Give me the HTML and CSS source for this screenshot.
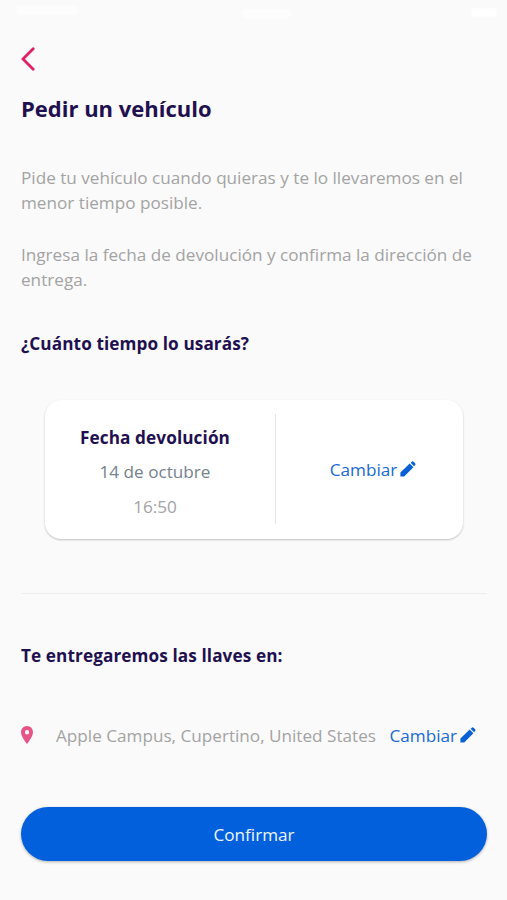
FILE: index.html
```html
<!DOCTYPE html>
<html lang="es">
<head>
<meta charset="utf-8">
<title>Pedir un vehículo</title>
<link rel="stylesheet" href="styles.css">
</head>
<body>
<div class="status"><i class="status-left"></i><i class="status-mid"></i><i class="status-right"></i></div>
<main>
  <a class="back" aria-label="Volver"><svg width="14" height="24" viewBox="0 0 14 24"><path d="M12.2 1.7 2 12l10.2 10.3" fill="none" stroke="#e02264" stroke-width="2.8" stroke-linecap="round"/></svg></a>
  <h1>Pedir un vehículo</h1>
  <p class="intro">Pide tu vehículo cuando quieras y te lo llevaremos en el<br>menor tiempo posible.</p>
  <p class="intro">Ingresa la fecha de devolución y confirma la dirección de<br>entrega.</p>
  <h2 class="when">¿Cuánto tiempo lo usarás?</h2>
  <section class="card">
    <div class="dates">
      <h3>Fecha devolución</h3>
      <div class="day">14 de octubre</div>
      <div class="hour">16:50</div>
    </div>
    <div class="action"><a class="change">Cambiar<svg width="16" height="16" viewBox="0 0 16 16"><path d="M.4 15.4v-3.800L9.700 2.600l3.700 3.600-9.200 9.200zM10.600 1.800 11.800.700q.9-.7 1.800 0l1.500 1.500q.8.9 0 1.800L14.100 5.300z"/></svg></a></div>
  </section>
  <hr>
  <h2 class="where">Te entregaremos las llaves en:</h2>
  <div class="address">
    <svg class="pin" width="12" height="18" viewBox="5 2 14 20" preserveAspectRatio="none"><path fill="#e65586" d="M12 2C8.13 2 5 5.13 5 9c0 5.25 7 13 7 13s7-7.75 7-13c0-3.87-3.13-7-7-7zm0 9.5a2.5 2.5 0 1 1 0-5 2.5 2.5 0 0 1 0 5z"/></svg>
    <span class="place">Apple Campus, Cupertino, United States</span>
    <a class="change">Cambiar<svg width="16" height="16" viewBox="0 0 16 16"><path d="M.4 15.4v-3.800L9.700 2.600l3.700 3.600-9.200 9.200zM10.600 1.800 11.800.700q.9-.7 1.800 0l1.500 1.500q.8.9 0 1.800L14.100 5.300z"/></svg></a>
  </div>
  <button class="confirm">Confirmar</button>
</main>
</body>
</html>
```
FILE: styles.css
```css
* { box-sizing: border-box; }
body {
  margin: 0;
  height: 900px;
  overflow: hidden;
  background: #fafafa;
  color: #a3a3a3;
  font: 17.15px/26px "Open Sans", sans-serif;
}
.status { height: 26px; padding: 6px 10px 0 16px; display: flex; justify-content: space-between; }
.status i { height: 9px; border-radius: 4px; background: #fff; filter: blur(1px); }
.status-left { width: 62px; opacity: .6; }
.status-mid { width: 48px; margin-right: 16px; margin-top: 3px; opacity: .7; }
.status-right { width: 26px; margin-top: 2px; }
main { padding: 0 20px 0 21px; }
.back { display: block; height: 24px; margin-top: 21px; }
.back svg, .pin { display: block; }
h1, h2, h3, p { margin: 0; color: #1f1150; }
h1 { margin-top: 21px; font-size: 22px; line-height: 32px; font-weight: 700; margin-bottom: 40.5px; }
h2, h3 { font-size: 17.2px; font-weight: 700; line-height: 26px; letter-spacing: .09px; }
.intro { color: #a3a3a3; height: 51.4px; line-height: 25.7px; margin-bottom: 25.7px; white-space: nowrap; }
.when { margin-top: 38px; }
.card {
  display: flex;
  width: 418px;
  height: 139px;
  margin: 43px 0 0 24px;
  padding: 14px 0 15px;
  border-radius: 16px;
  background: #fff;
  box-shadow: 0 1px 2px rgba(0,0,0,.23);
}
.dates { width: 231px; padding: 11px 10px 0 0; border-right: 1px solid #e1e6e9; text-align: center; }
.day { margin-top: 8px; color: #74818e; }
.hour { margin-top: 9px; }
.action { flex: 1; display: flex; justify-content: center; padding: 43px 0 0 7px; }
.change { display: flex; height: 26px; color: #1769d3; }
.change svg { margin: 4px 0 0 3px; fill: #0860d5; }
hr { height: 1px; border: 0; margin: 54px 0 0; background: #eee; }
.where { margin-top: 49px; }
.address { display: flex; margin-top: 54px; white-space: nowrap; }
.pin { margin: 3px 23px 0 0; }
.place { width: 333.5px; }
.confirm {
  display: block;
  width: 466px;
  height: 54px;
  margin-top: 58px;
  padding: 2px 0 0;
  border: 0;
  border-radius: 27px;
  background: #0360dc;
  color: #edf5ff;
  font: inherit;
  box-shadow: 0 1px 3px rgba(0,0,0,.3);
}
```
